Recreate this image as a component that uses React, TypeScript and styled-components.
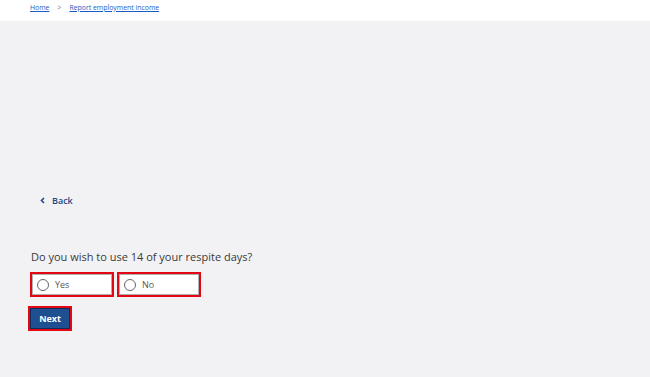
import * as React from 'react'
import styled, { createGlobalStyle } from 'styled-components'

const GlobalStyle = createGlobalStyle`
    html, body {
        margin: 0;
        padding: 0;
        height: 100%;
        background: #f2f2f4;
    }
    #root {
        min-height: 100%;
    }
    * {
        box-sizing: border-box;
    }
`

const Page = styled.div`
    display: flex;
    flex-direction: column;
    min-height: 377px;
    background: #f2f2f4;
    font-family: 'Open Sans', 'Noto Sans', Arial, sans-serif;
    color: #323232;
`
const Header = styled.header`
    display: flex;
    align-items: center;
    height: 21px;
    padding: 0 0 6px 30px;
    background: #ffffff;
    font-size: 6.9px;
`
const Crumb = styled.a`
    color: #1a5bc4;
    text-decoration: underline;
`
const Sep = styled.span`
    margin: 0 8px 0 8px;
    color: #777;
`
const Main = styled.main`
    display: flex;
    flex-direction: column;
    align-items: flex-start;
    padding: 0 0 0 28px;
`
const BackLink = styled.a`
    display: flex;
    align-items: center;
    gap: 7px;
    margin: 173px 0 0 12px;
    font-size: 9px;
    font-weight: 600;
    color: #21497f;
`
const Question = styled.h2`
    margin: 42px 0 0 3px;
    font-size: 11px;
    font-weight: 400;
    color: #3a3a3a;
`
const Options = styled.div`
    display: flex;
    gap: 3px;
    margin: 8px 0 0 2px;
`
const Option = styled.label`
    display: flex;
    align-items: center;
    gap: 6px;
    width: 84px;
    height: 25px;
    padding-left: 5px;
    background: #ffffff;
    border: 2px solid #e30613;
    box-shadow: inset 0 0 0 1px #b0b0b0;
    font-size: 9px;
    color: #555;
`
const Radio = styled.span`
    width: 12px;
    height: 12px;
    border-radius: 50%;
    border: 1px solid #666;
    background: #fff;
`
const NextButton = styled.button`
    margin-top: 9px;
    width: 44px;
    height: 25px;
    padding: 0;
    border: 2px solid #e30613;
    box-shadow: inset 0 0 0 1px #0d2e5c;
    background: #1d4f91;
    color: #ffffff;
    font-family: inherit;
    font-size: 9px;
    font-weight: 700;
`

const Chevron = () => (
    <svg width="5" height="7" viewBox="0 0 5 7">
        <path d="M4 1 L1.5 3.5 L4 6" stroke="#21497f" strokeWidth="1.6" fill="none" />
    </svg>
)

export default function App() {
    return (
        <>
            <GlobalStyle />
            <Page>
                <Header>
                    <Crumb>Home</Crumb>
                    <Sep>&gt;</Sep>
                    <Crumb>Report employment income</Crumb>
                </Header>
                <Main>
                    <BackLink>
                        <Chevron />
                        Back
                    </BackLink>
                    <Question>Do you wish to use 14 of your respite days?</Question>
                    <Options>
                        <Option>
                            <Radio />
                            Yes
                        </Option>
                        <Option>
                            <Radio />
                            No
                        </Option>
                    </Options>
                    <NextButton>Next</NextButton>
                </Main>
            </Page>
        </>
    )
}
